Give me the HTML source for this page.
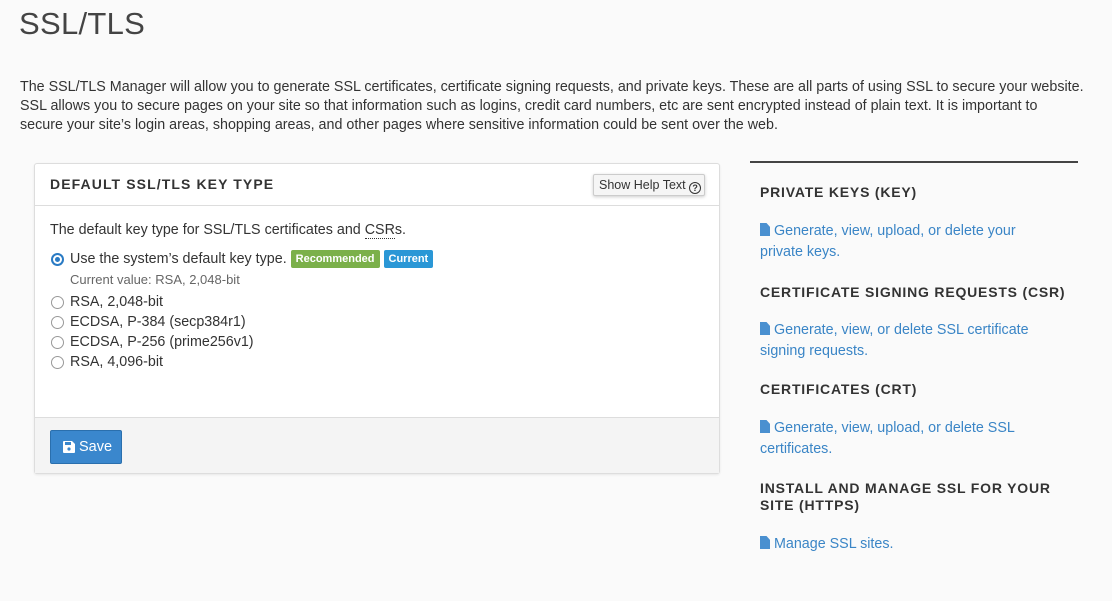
<!DOCTYPE html>
<html><head><meta charset="utf-8"><style>
*{box-sizing:border-box;margin:0;padding:0}
body{width:1112px;height:601px;background:#fafafa;font-family:"Liberation Sans","DejaVu Sans",sans-serif;color:#333;position:relative;overflow:hidden;font-size:14px}
.a{position:absolute;white-space:nowrap}
h1{position:absolute;left:19px;top:6px;font-weight:normal;font-size:31px;color:#444;letter-spacing:0.3px}
.intro{position:absolute;left:20px;top:78px;width:1090px;font-size:14.3px;line-height:19px;white-space:nowrap}
.panel{position:absolute;left:34px;top:163px;width:686px;height:311px;background:#fff;border:1px solid #ddd;border-radius:3px;box-shadow:0 1px 2px rgba(0,0,0,.08)}
.ph{height:42px;border-bottom:1px solid #ddd}
.ph span.t{position:absolute;left:15px;top:12px;font-weight:bold;font-size:14px;letter-spacing:1.1px;color:#333}
.help{position:absolute;left:558px;top:10px;width:112px;height:22px;border:1px solid #ccc;border-radius:2px;background:#f5f5f5;font-size:12.5px;line-height:20px;padding-left:5px;box-shadow:0 1px 3px rgba(0,0,0,.2);white-space:nowrap}
.foot{position:absolute;left:0;top:253px;width:684px;height:56px;background:#f4f4f4;border-top:1px solid #ddd}
.save{position:absolute;left:15px;top:12px;width:72px;height:34px;background:#3a87cd;border:1px solid #2a6fad;border-radius:2px;color:#fff;font-size:14.5px;line-height:32px;padding-left:28px}
.radio{position:absolute;width:13px;height:13px;border:1.5px solid #999;border-radius:50%;background:#fff}
.radio.on{border:2px solid #2a7bc4}
.radio.on:after{content:"";position:absolute;left:2px;top:2px;width:5px;height:5px;border-radius:50%;background:#2a7bc4}
.badge{display:inline-block;color:#fff;font-size:11px;font-weight:bold;padding:0 5px;height:18px;line-height:18px;border-radius:2px;vertical-align:1px}
.side{position:absolute;left:750px;top:161px;width:328px;border-top:2px solid #444}
.sh{position:absolute;left:760px;font-weight:bold;font-size:14px;letter-spacing:0.8px;color:#333;line-height:17px}
.lk{position:absolute;left:760px;color:#3a85c6;font-size:14.3px;line-height:21px;width:290px}
.doc{display:inline-block;width:10px;height:13px;background:#4a90d0;margin-right:4px;vertical-align:-1px;clip-path:polygon(0 0,65% 0,100% 30%,100% 100%,0 100%)}
</style></head><body>
<h1>SSL/TLS</h1>
<div class="intro">The SSL/TLS Manager will allow you to generate SSL certificates, certificate signing requests, and private keys. These are all parts of using SSL to secure your website.<br>SSL allows you to secure pages on your site so that information such as logins, credit card numbers, etc are sent encrypted instead of plain text. It is important to<br>secure your site’s login areas, shopping areas, and other pages where sensitive information could be sent over the web.</div>
<div class="panel">
 <div class="ph"><span class="t">DEFAULT SSL/TLS KEY TYPE</span><div class="help">Show Help Text <span style="display:inline-block;width:12px;height:12px;border:1.3px solid #333;border-radius:50%;font-size:9px;line-height:10px;text-align:center;font-weight:bold;vertical-align:-2px">?</span></div></div>
 <div class="a" style="left:15px;top:58px;font-size:14.3px">The default key type for SSL/TLS certificates and <span style="border-bottom:1px dotted #333">CSR</span>s.</div>
 <div class="radio on" style="left:16px;top:89px"></div>
 <div class="a" style="left:35px;top:86px;font-size:14.3px">Use the system’s default key type. <span class="badge" style="background:#7bb04a">Recommended</span> <span class="badge" style="background:#2a97d6">Current</span></div>
 <div class="a" style="left:35px;top:108px;font-size:13px;color:#666">Current value: RSA, 2,048-bit</div>
 <div class="radio" style="left:16px;top:132px"></div><div class="a" style="left:35px;top:130px;font-size:14.3px">RSA, 2,048-bit</div>
 <div class="radio" style="left:16px;top:152px"></div><div class="a" style="left:35px;top:150px;font-size:14.3px">ECDSA, P-384 (secp384r1)</div>
 <div class="radio" style="left:16px;top:172px"></div><div class="a" style="left:35px;top:170px;font-size:14.3px">ECDSA, P-256 (prime256v1)</div>
 <div class="radio" style="left:16px;top:192px"></div><div class="a" style="left:35px;top:190px;font-size:14.3px">RSA, 4,096-bit</div>
 <div class="foot"><div class="save"><svg style="position:absolute;left:12px;top:10px" width="12" height="12" viewBox="0 0 12 12"><path d="M0 1a1 1 0 0 1 1-1h8l3 3v8a1 1 0 0 1-1 1H1a1 1 0 0 1-1-1z" fill="#fff"/><rect x="2" y="1" width="6" height="3" fill="#3a87cd"/><circle cx="6" cy="8" r="1.6" fill="#3a87cd"/></svg>Save</div></div>
</div>
<div class="side"></div>
<div class="sh" style="top:184px">PRIVATE KEYS (KEY)</div>
<div class="lk" style="top:221px"><span class="doc"></span>Generate, view, upload, or delete your private keys.</div>
<div class="sh" style="top:284px">CERTIFICATE SIGNING REQUESTS (CSR)</div>
<div class="lk" style="top:320px"><span class="doc"></span>Generate, view, or delete SSL certificate signing requests.</div>
<div class="sh" style="top:381px">CERTIFICATES (CRT)</div>
<div class="lk" style="top:418px"><span class="doc"></span>Generate, view, upload, or delete SSL certificates.</div>
<div class="sh" style="top:480px;white-space:normal;width:320px">INSTALL AND MANAGE SSL FOR YOUR SITE (HTTPS)</div>
<div class="lk" style="top:534px"><span class="doc"></span>Manage SSL sites.</div>
</body></html>
